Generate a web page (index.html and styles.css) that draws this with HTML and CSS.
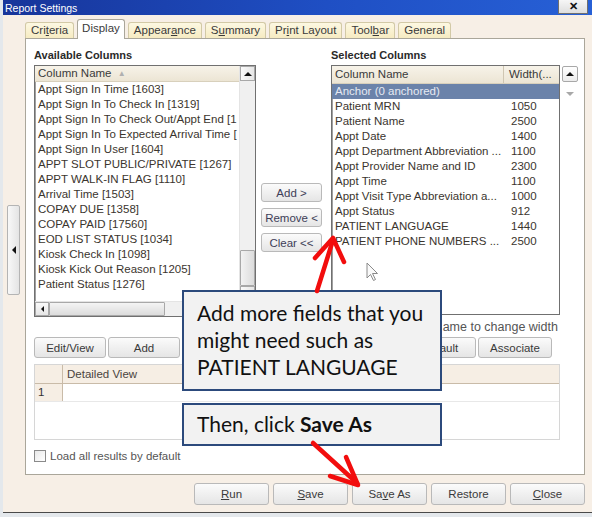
FILE: index.html
```html
<!DOCTYPE html>
<html>
<head>
<meta charset="utf-8">
<link rel="stylesheet" href="styles.css">
</head>
<body>
<div class="win">
  <div class="titlebar">
    <span class="title">Report Settings</span>
    <span class="closebtn">✕</span>
  </div>
  <div class="frame">
    <div class="sidestrip">
      <div class="collapse"><span class="tri-left"></span></div>
    </div>
    <div class="mainarea">
      <div class="tabs">
        <div class="tab">Cri<span class="ul">t</span>eria</div>
        <div class="tab active">Display</div>
        <div class="tab">Appear<span class="ul">a</span>nce</div>
        <div class="tab">S<span class="ul">u</span>mmary</div>
        <div class="tab">Pr<span class="ul">i</span>nt Layout</div>
        <div class="tab">Tool<span class="ul">b</span>ar</div>
        <div class="tab">General</div>
      </div>
      <div class="panel">
        <div class="lists">
          <div class="col-left">
            <div class="heading">Available Columns</div>
            <div class="listbox avail">
              <div class="lb-top">
                <div class="lb-content">
                  <div class="lb-head">Column Name <span class="sort">▲</span></div>
                  <div class="item">Appt Sign In Time [1603]</div>
                  <div class="item">Appt Sign In To Check In [1319]</div>
                  <div class="item">Appt Sign In To Check Out/Appt End [1</div>
                  <div class="item">Appt Sign In To Expected Arrival Time [</div>
                  <div class="item">Appt Sign In User [1604]</div>
                  <div class="item">APPT SLOT PUBLIC/PRIVATE [1267]</div>
                  <div class="item">APPT WALK-IN FLAG [1110]</div>
                  <div class="item">Arrival Time [1503]</div>
                  <div class="item">COPAY DUE [1358]</div>
                  <div class="item">COPAY PAID [17560]</div>
                  <div class="item">EOD LIST STATUS [1034]</div>
                  <div class="item">Kiosk Check In [1098]</div>
                  <div class="item">Kiosk Kick Out Reason [1205]</div>
                  <div class="item">Patient Status [1276]</div>
                </div>
                <div class="vscroll">
                  <div class="sbtn"><span class="tri-up"></span></div>
                  <div class="track"></div>
                  <div class="vthumb"></div>
                  <div class="sbtn"><span class="tri-down"></span></div>
                </div>
              </div>
              <div class="hscroll">
                <div class="sbtn-h"><span class="tri-left small"></span></div>
                <div class="hthumb"></div>
                <div class="track"></div>
                <div class="corner"></div>
              </div>
            </div>
          </div>
          <div class="col-mid">
            <div class="btn mid">Add &gt;</div>
            <div class="btn mid">Remove &lt;</div>
            <div class="btn mid">Clear &lt;&lt;</div>
          </div>
          <div class="col-right">
            <div class="heading">Selected Columns</div>
            <div class="listbox sel">
              <div class="sel-head">
                <span class="c-name">Column Name</span>
                <span class="c-width">Width(...</span>
              </div>
              <div class="row selected"><span class="c-name">Anchor (0 anchored)</span><span class="c-width"></span></div>
              <div class="row"><span class="c-name">Patient MRN</span><span class="c-width">1050</span></div>
              <div class="row"><span class="c-name">Patient Name</span><span class="c-width">2500</span></div>
              <div class="row"><span class="c-name">Appt Date</span><span class="c-width">1400</span></div>
              <div class="row"><span class="c-name">Appt Department Abbreviation ...</span><span class="c-width">1100</span></div>
              <div class="row"><span class="c-name">Appt Provider Name and ID</span><span class="c-width">2300</span></div>
              <div class="row"><span class="c-name">Appt Time</span><span class="c-width">1100</span></div>
              <div class="row"><span class="c-name">Appt Visit Type Abbreviation a...</span><span class="c-width">1000</span></div>
              <div class="row"><span class="c-name">Appt Status</span><span class="c-width">912</span></div>
              <div class="row"><span class="c-name">PATIENT LANGUAGE</span><span class="c-width">1440</span></div>
              <div class="row"><span class="c-name">PATIENT PHONE NUMBERS ...</span><span class="c-width">2500</span></div>
            </div>
          </div>
          <div class="col-arrows">
            <div class="arrowbtn"><span class="tri-up"></span></div>
            <div class="arrowplain"><span class="tri-down grey"></span></div>
          </div>
        </div>
        <div class="hint">ame to change width</div>
        <div class="btnrow">
          <div class="btn">Edit/View</div>
          <div class="btn">Add</div>
          <div class="btn"></div>
          <div class="btn"></div>
          <div class="btn"></div>
          <div class="btn">Default</div>
          <div class="btn wide">Associate</div>
        </div>
        <div class="grid">
          <div class="g-head"><div class="g-rowhdr"></div><div class="g-cell">Detailed View</div></div>
          <div class="g-row"><div class="g-rowhdr">1</div><div class="g-cell"></div></div>
        </div>
        <div class="check"><span class="box"></span><span>Load all results by default</span></div>
      </div>
      <div class="bottombar">
        <div class="btn big"><span class="ul">R</span>un</div>
        <div class="btn big"><span class="ul">S</span>ave</div>
        <div class="btn big">Sa<span class="ul">v</span>e As</div>
        <div class="btn big">Restore</div>
        <div class="btn big"><span class="ul">C</span>lose</div>
      </div>
    </div>
  </div>
</div>

<svg class="overlay" width="592" height="517" viewBox="0 0 592 517">
  <g stroke="#f20d0d" stroke-width="4.5" stroke-linecap="round" stroke-linejoin="round" fill="none">
    <path d="M317 291 L333 240"/>
    <path d="M315 258 L333 238 L344 262"/>
    <path d="M313 443 L357 483"/>
    <path d="M330 476 L358 485 L346 457"/>
  </g>
  <path d="M367 263 L367 278 L370.5 274.5 L373.5 280.5 L375.5 279.5 L372.5 273.5 L377.5 273.5 Z" fill="#fafafa" stroke="#8a8a8a" stroke-width="1"/>
</svg>

<div class="callout c1">Add more fields that you<br>might need such as<br>PATIENT LANGUAGE</div>
<div class="callout c2">Then, click <b>Save As</b></div>
</body>
</html>
```

FILE: styles.css
```css
* { box-sizing: border-box; }
html, body { margin: 0; padding: 0; }
body {
  width: 592px;
  height: 517px;
  background: #e4e8ec;
  font-family: "Liberation Sans", Arial, sans-serif;
  font-size: 11.5px;
  color: #333;
  position: relative;
  overflow: hidden;
}
.ul { text-decoration: underline; }

.win {
  margin-left: 3px;
  width: 589px;
  height: 513px;
  background: #f7efe6;
  border-bottom: 1px solid #4a4a4a;
  display: flex;
  flex-direction: column;
}
.titlebar {
  height: 15px;
  flex: none;
  background: linear-gradient(to right, #17359a, #1f4fc4 55%, #2760d6);
  display: flex;
  align-items: center;
  justify-content: space-between;
  padding-left: 2px;
}
.title { color: #fff; font-size: 10.5px; }
.closebtn {
  width: 30px;
  height: 14px;
  margin-right: 4px;
  align-self: flex-start;
  background: linear-gradient(#f6f6f6, #dedede);
  border: 1px solid #6f6f6f;
  border-top: none;
  color: #111;
  font-size: 11px;
  font-weight: bold;
  text-align: center;
  line-height: 13px;
}

.frame { flex: 1; display: flex; }
.sidestrip { width: 22px; flex: none; padding-top: 190px; padding-left: 4px; }
.collapse {
  width: 13px;
  height: 90px;
  background: linear-gradient(to right, #f8f8f8, #e4e4e4);
  border: 1px solid #b4b4b4;
  border-radius: 2px;
  display: flex;
  align-items: center;
  justify-content: center;
}
.mainarea {
  flex: 1;
  display: flex;
  flex-direction: column;
  padding-top: 4px;
  padding-right: 7px;
}

/* triangles */
.tri-left { width: 0; height: 0; border-top: 4px solid transparent; border-bottom: 4px solid transparent; border-right: 4px solid #111; }
.tri-left.small { border-top-width: 3px; border-bottom-width: 3px; border-right-width: 3px; }
.tri-up { width: 0; height: 0; border-left: 4px solid transparent; border-right: 4px solid transparent; border-bottom: 4px solid #111; }
.tri-down { width: 0; height: 0; border-left: 4px solid transparent; border-right: 4px solid transparent; border-top: 4px solid #111; }
.tri-down.grey { border-top-color: #a8a8a8; }

/* tabs */
.tabs {
  height: 20px;
  flex: none;
  display: flex;
  align-items: flex-end;
  gap: 3px;
  position: relative;
  z-index: 1;
  margin-bottom: -1px;
}
.tab {
  height: 16px;
  margin-bottom: 1px;
  padding: 0 5px;
  border: 1px solid #d2c9a6;
  border-bottom: none;
  border-radius: 3px 3px 0 0;
  background: linear-gradient(#fdf8e2, #f6ebc2);
  line-height: 15px;
  color: #3a3a3a;
}
.tab.active {
  height: 20px;
  margin-bottom: 0;
  background: #fff;
  border-color: #aaa69a;
  line-height: 16px;
  padding: 0 4px;
}

/* panel */
.panel {
  height: 437px;
  flex: none;
  background: #fff;
  border: 1px solid #aaa69a;
  padding: 9px 0 0 8px;
}
.lists { display: flex; height: 269px; }
.heading { height: 14px; line-height: 14px; margin-bottom: 3px; font-weight: bold; font-size: 11px; color: #2a2a2a; }
.col-left { width: 222px; display: flex; flex-direction: column; }
.col-mid { width: 75px; padding-top: 135px; padding-left: 5px; display: flex; flex-direction: column; gap: 6px; }
.col-right { width: 229px; display: flex; flex-direction: column; }
.col-arrows { width: 16px; margin-left: 2px; padding-top: 18px; }

.listbox { border: 1px solid #707070; background: #fff; box-shadow: inset 1px 1px 0 #a0a0a0; }
.avail { height: 252px; display: flex; flex-direction: column; }
.lb-top { height: 235px; display: flex; }
.lb-content { flex: 1; overflow: hidden; white-space: nowrap; }
.lb-head {
  height: 16px;
  line-height: 15px;
  padding-left: 3px;
  background: linear-gradient(#f7f3e9, #ece5d4);
  border-bottom: 1px solid #d8d0bc;
  color: #3a3a3a;
}
.sort { color: #b0b0b0; font-size: 8px; vertical-align: 1px; margin-left: 3px; }
.item { height: 15px; line-height: 15px; padding-left: 3px; color: #3b352e; }
.vscroll { width: 16px; display: flex; flex-direction: column; background: #f0f0f0; border-left: 1px solid #e4e4e4; }
.vscroll .track { flex: 1; }
.sbtn { height: 15px; display: flex; align-items: center; justify-content: center; background: linear-gradient(to right, #fafafa, #e6e6e6); border: 1px solid #a8a8a8; }
.vthumb { height: 36px; background: linear-gradient(to right, #f2f2f2, #dcdcdc); border: 1px solid #a8a8a8; border-radius: 1px; }
.hscroll { height: 15px; display: flex; background: #f0f0f0; border-top: 1px solid #e4e4e4; }
.sbtn-h { width: 14px; display: flex; align-items: center; justify-content: center; background: linear-gradient(#fafafa, #e6e6e6); border: 1px solid #a8a8a8; }
.hthumb { width: 116px; background: linear-gradient(#f4f4f4, #dcdcdc); border: 1px solid #a8a8a8; border-radius: 1px; }
.hscroll .track { flex: 1; }
.corner { width: 16px; background: #ececec; }

.sel { height: 250px; overflow: hidden; white-space: nowrap; }
.sel-head {
  height: 18px;
  line-height: 16px;
  display: flex;
  background: linear-gradient(#f7f3e9, #ece5d4);
  border-bottom: 1px solid #d8d0bc;
  color: #3a3a3a;
}
.sel-head .c-name { border-right: 1px solid #cfc6b2; }
.c-name { width: 172px; padding-left: 3px; overflow: hidden; }
.c-width { flex: 1; padding-left: 5px; }
.row { height: 15px; line-height: 15px; display: flex; color: #3b352e; }
.row .c-width { padding-left: 7px; }
.row.selected { background: #6b83aa; color: #e6eaf2; }

.arrowbtn { height: 16px; display: flex; align-items: center; justify-content: center; background: linear-gradient(#ffffff, #ececec); border: 1px solid #a8a8a8; border-radius: 2px; }
.arrowplain { height: 16px; display: flex; align-items: center; justify-content: center; margin-top: 4px; }

.hint { width: 526px; height: 20px; line-height: 20px; text-align: right; padding-right: 2px; color: #555; font-size: 12.5px; }

.btn {
  display: flex;
  align-items: center;
  justify-content: center;
  background: linear-gradient(#fbfbfb, #e5e5e5);
  border: 1px solid #b9b9b9;
  border-radius: 3px;
  color: #3a3a3a;
  white-space: nowrap;
}
.btn.mid { width: 61px; height: 19px; color: #3d3d58; }
.btnrow { display: flex; gap: 2px; height: 21px; margin-bottom: 6px; width: 526px; }
.btnrow .btn { width: 72px; }
.btnrow .btn.wide { width: 74px; }

.grid { width: 526px; height: 76px; border: 1px solid #d6d6d6; }
.g-head { height: 19px; display: flex; background: #f6eee4; border-bottom: 1px solid #c9bba8; }
.g-head .g-cell { padding-left: 4px; line-height: 18px; color: #4a4540; }
.g-row { height: 18px; display: flex; border-bottom: 1px solid #e8e8e8; }
.g-rowhdr { width: 28px; border-right: 1px solid #c9bba8; background: #f6eee4; padding-left: 3px; line-height: 17px; color: #333; }
.g-cell { flex: 1; }

.check { margin-top: 9px; height: 13px; display: flex; align-items: center; gap: 4px; color: #555; }
.box { width: 12px; height: 12px; border: 1px solid #8a8a8a; background: linear-gradient(135deg, #e8e8e8, #fff); }

.bottombar { display: flex; justify-content: flex-end; gap: 4px; margin-top: 8px; }
.btn.big { width: 75px; height: 22px; }

/* overlays */
.overlay { position: absolute; left: 0; top: 0; pointer-events: none; z-index: 5; }
.callout {
  position: absolute;
  left: 182px;
  width: 260px;
  background: #f2f2f2;
  border: 2.5px solid #2c4a7c;
  font-family: Lato, "Open Sans", sans-serif;
  font-size: 21px;
  line-height: 27px;
  color: #111;
  padding-left: 13px;
  z-index: 4;
  white-space: nowrap;
}
.c1 { top: 290px; height: 101px; padding-top: 7px; }
.c2 { top: 403px; height: 43px; padding-top: 5px; }
```
